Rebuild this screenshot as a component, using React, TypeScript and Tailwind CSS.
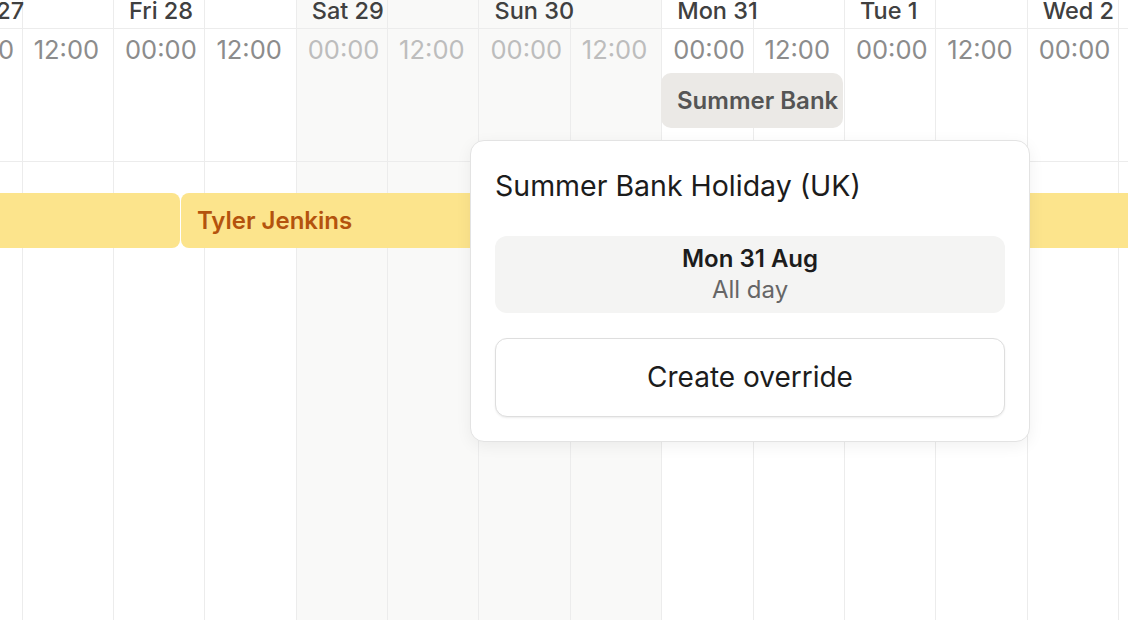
import React from "react";

/* =======================
   DATA
======================= */
interface Column {
  day?: string;
  time: string;
  weekend?: boolean;
}

const columns: Column[] = [
  { day: "Thu 27", time: "00:00" },
  { time: "12:00" },
  { day: "Fri 28", time: "00:00" },
  { time: "12:00" },
  { day: "Sat 29", time: "00:00", weekend: true },
  { time: "12:00", weekend: true },
  { day: "Sun 30", time: "00:00", weekend: true },
  { time: "12:00", weekend: true },
  { day: "Mon 31", time: "00:00" },
  { time: "12:00" },
  { day: "Tue 1", time: "00:00" },
  { time: "12:00" },
  { day: "Wed 2", time: "00:00" },
  { time: "12:00" },
];

/* =======================
   COMPONENT
======================= */
export default function App() {
  return (
    <div className="relative w-[1128px] h-[620px] overflow-hidden bg-white font-['Inter','Noto_Sans',sans-serif]">
      {/* grid of half-day columns */}
      <div className="flex h-full ml-[-69.7px]">
        {columns.map((col, i) => (
          <div
            key={i}
            className={`flex flex-col w-[91.36px] shrink-0 h-full border-l border-[#ececec] ${
              col.weekend ? "bg-[#f9f9f8]" : "bg-white"
            }`}
          >
            <div className="h-[29px] border-b border-[#ececec]">
              {col.day && (
                <div className="relative z-10 pl-[15px] text-[23.5px] leading-[21px] font-medium text-[#404040] whitespace-nowrap">
                  {col.day}
                </div>
              )}
            </div>
            <div className="h-[133px] border-b border-[#ececec] pl-[11px] pt-[9px]">
              <span
                className={`text-[25.5px] leading-[24px] whitespace-nowrap ${
                  col.weekend ? "text-[#bdbdbd]" : "text-[#8c8c8c]"
                }`}
              >
                {col.time}
              </span>
            </div>
            <div className="flex-1" />
          </div>
        ))}
      </div>

      {/* holiday chip */}
      <div className="absolute left-[661px] top-[73px] w-[182px] h-[55px] rounded-[10px] bg-[#ebe9e6] flex items-center pl-4 overflow-hidden">
        <span className="text-[24px] font-semibold text-[#555555] whitespace-nowrap">
          Summer Bank Holiday (UK)
        </span>
      </div>

      {/* shift bars */}
      <div className="absolute left-[-40px] top-[193px] w-[219.5px] h-[55px] rounded-lg bg-[#fce48c]" />
      <div className="absolute left-[181px] top-[193px] w-[1000px] h-[55px] rounded-l-lg bg-[#fce48c] flex items-center pl-[16px]">
        <span className="text-[24px] font-semibold text-[#b4530d] whitespace-nowrap">
          Tyler Jenkins
        </span>
      </div>

      {/* popover */}
      <div className="absolute left-[470px] top-[140px] w-[560px] rounded-[14px] border border-[#e3e3e3] bg-white shadow-[0_4px_16px_rgba(0,0,0,0.06)] px-6 pt-[26.5px] pb-6">
        <h3 className="text-[28.5px] leading-[36px] font-normal text-[#1c1c1c]">
          Summer Bank Holiday (UK)
        </h3>
        <div className="mt-8 rounded-xl bg-[#f4f4f3] py-[7.5px] text-center">
          <div className="text-[24px] leading-[31px] font-semibold text-[#1c1c1c]">
            Mon 31 Aug
          </div>
          <div className="text-[24px] leading-[31px] text-[#666666]">
            All day
          </div>
        </div>
        <button className="mt-[25px] w-full h-[79px] rounded-xl border border-[#dedede] bg-white shadow-[0_1px_2px_rgba(0,0,0,0.08)] text-[28px] text-[#1c1c1c]">
          Create override
        </button>
      </div>
    </div>
  );
}
